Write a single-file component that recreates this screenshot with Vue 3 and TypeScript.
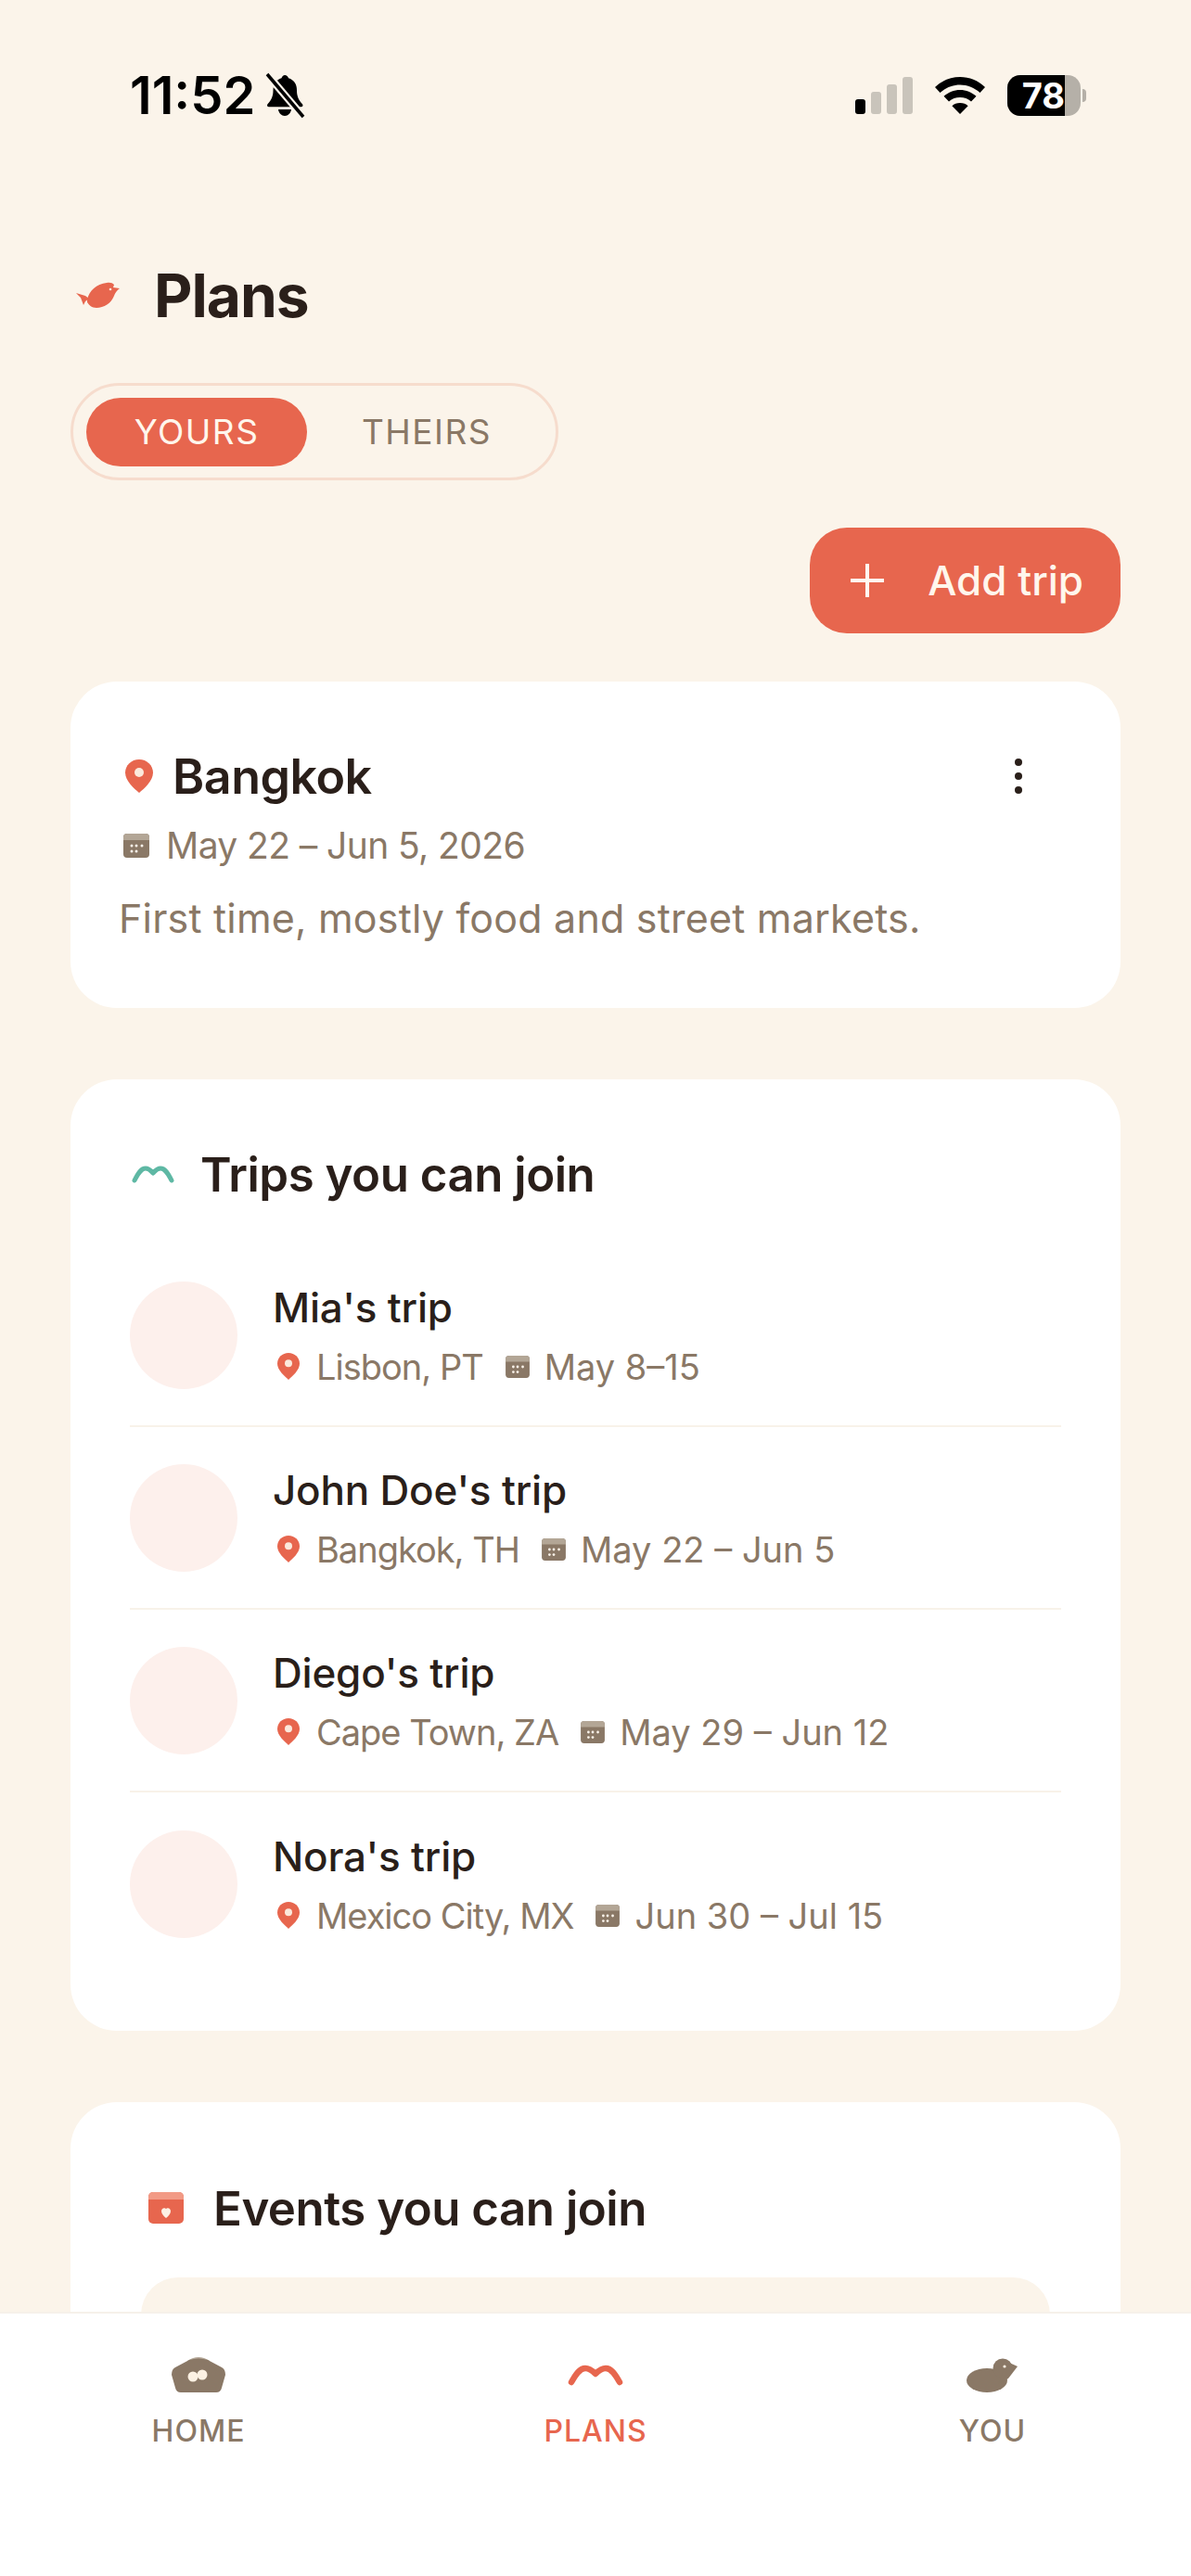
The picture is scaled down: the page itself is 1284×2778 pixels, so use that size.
<script setup lang="ts">
interface Trip {
  name: string;
  place: string;
  dates: string;
}

const trips: Trip[] = [
  { name: "Mia's trip", place: "Lisbon, PT", dates: "May 8–15" },
  { name: "John Doe's trip", place: "Bangkok, TH", dates: "May 22 – Jun 5" },
  { name: "Diego's trip", place: "Cape Town, ZA", dates: "May 29 – Jun 12" },
  { name: "Nora's trip", place: "Mexico City, MX", dates: "Jun 30 – Jul 15" },
];
</script>

<template>
  <div class="screen">
    <svg class="defs" width="0" height="0" aria-hidden="true">
      <symbol id="pin" viewBox="0 0 30 36">
        <path d="M15 0C6.7 0 0 6.4 0 14.3 0 23 9.6 31.500 15 36c5.400-4.500 15-13 15-21.700C30 6.400 23.300 0 15 0Z" fill="#e7664e" />
        <circle cx="15" cy="14" r="5" fill="#fbe9dc" />
      </symbol>
      <symbol id="cal" viewBox="0 0 28 26">
        <rect width="28" height="26" rx="4" fill="#8a7866" />
        <path d="M4 0h20a4 4 0 0 1 4 4v3H0V4a4 4 0 0 1 4-4Z" fill="#b3a696" />
        <g fill="#fbf3ea">
          <circle cx="9" cy="13" r="1.500" /><circle cx="14" cy="13" r="1.500" /><circle cx="20" cy="13" r="1.500" />
          <circle cx="9" cy="19" r="1.500" /><circle cx="14" cy="19" r="1.500" />
        </g>
      </symbol>
    </svg>

    <div class="status">
      <div class="status-left">
        <span class="time">11:52</span>
        <svg width="44" height="50" viewBox="0 0 44 50">
          <path d="M22 3c2 0 3.500 1.300 4 3.200 6 1.800 9 6.500 9 13 0 6 1.500 10 6 15 1 1.300.5 3-1.500 3H5c-2 0-2.500-1.700-1.500-3 4.500-5 6-9 6-15 0-6.500 3-11.200 9-13C19 4.300 20.500 3 22 3Z" fill="#000" />
          <path d="M15 40h14c-.5 4-3.500 7-7 7s-6.500-3-7-7Z" fill="#000" />
          <path d="M3 2 42 48" stroke="#fbf4ea" stroke-width="8" />
          <path d="M3 2 42 48" stroke="#000" stroke-width="3.500" />
        </svg>
      </div>
      <div class="status-right">
        <svg class="signal" width="62" height="40" viewBox="0 0 62 40">
          <rect x="0" y="24" width="11" height="16" rx="3" fill="#000" />
          <rect x="17" y="16" width="11" height="24" rx="3" fill="#c9c4bb" />
          <rect x="34" y="8" width="11" height="32" rx="3" fill="#c9c4bb" />
          <rect x="51" y="0" width="11" height="40" rx="3" fill="#c9c4bb" />
        </svg>
        <svg class="wifi" width="54" height="40" viewBox="0 0 54 40">
          <path d="M27 0c10 0 19.500 3.800 27 11l-5.500 6C42.700 11.600 35 8.500 27 8.500S11.300 11.600 5.500 17L0 11C7.500 3.800 17 0 27 0Z" fill="#000" />
          <path d="M27 14c6.500 0 12.500 2.400 17.500 6.800L39 26.500c-3.300-2.900-7.500-4.400-12-4.400s-8.700 1.500-12 4.400L9.500 20.800C14.500 16.400 20.500 14 27 14Z" fill="#000" />
          <path d="M27 28c3.500 0 6.500 1.200 8.600 3.200L27 40l-8.600-8.800C20.500 29.200 23.500 28 27 28Z" fill="#000" />
        </svg>
        <div class="battery">
          <div class="battery-body">
            <div class="battery-level">78</div>
          </div>
          <div class="battery-nub"></div>
        </div>
      </div>
    </div>

    <main class="content">
      <header class="page-head">
        <svg class="bird" width="48" height="28" viewBox="0 0 48 28">
          <path d="M12 19C14 10 22 2 33 1c4-.5 6 0 8 2l-1 3 7 1c-3 2-5 5-6 8-3 8-11 13-19 13-5 0-8-3-10-6Z" fill="#e7664e" />
          <path d="M0 12l10 3 4 3-4 3-2 4-3-8Z" fill="#e7664e" />
          <circle cx="37" cy="8" r="1.300" fill="#fbe9dc" />
        </svg>
        <h1>Plans</h1>
      </header>

      <div class="segment">
        <div class="seg-item active">YOURS</div>
        <div class="seg-item">THEIRS</div>
      </div>

      <div class="actions">
        <div class="add-btn">
          <svg width="36" height="36" viewBox="0 0 36 36">
            <path d="M18 0v36M0 18h36" stroke="#fff8f0" stroke-width="4" />
          </svg>
          <span>Add trip</span>
        </div>
      </div>

      <section class="card plan">
        <div class="plan-title">
          <svg class="pin-lg"><use href="#pin" /></svg>
          <span class="plan-name">Bangkok</span>
          <div class="kebab"><i></i><i></i><i></i></div>
        </div>
        <div class="plan-date">
          <svg class="cal-lg"><use href="#cal" /></svg>
          <span>May 22 – Jun 5, 2026</span>
        </div>
        <p class="plan-desc">First time, mostly food and street markets.</p>
      </section>

      <section class="card join">
        <div class="section-head">
          <svg width="46" height="22" viewBox="0 0 46 22" class="wave">
            <path d="M3 18C7 10 10 5 15 5c4 0 6 3 8 5 2-2 4-5 8-5 5 0 8 5 12 13" fill="none" stroke="#5eb8a4" stroke-width="5" stroke-linecap="round" stroke-linejoin="round" />
          </svg>
          <h2>Trips you can join</h2>
        </div>
        <ul class="trips">
          <li v-for="trip in trips" :key="trip.name" class="trip">
            <div class="avatar"></div>
            <div class="trip-text">
              <div class="trip-name">{{ trip.name }}</div>
              <div class="trip-meta">
                <svg class="pin-sm"><use href="#pin" /></svg>
                <span class="place">{{ trip.place }}</span>
                <svg class="cal-sm"><use href="#cal" /></svg>
                <span>{{ trip.dates }}</span>
              </div>
            </div>
          </li>
        </ul>
      </section>

      <section class="card events">
        <div class="section-head events-head">
          <svg width="38" height="34" viewBox="0 0 38 34">
            <rect width="38" height="34" rx="5" fill="#e7664e" />
            <path d="M5 0h28a5 5 0 0 1 5 5v3H0V5a5 5 0 0 1 5-5Z" fill="#f29a85" />
            <path d="M19 28c-3-2.500-5-5-5-7.500 0-2 1.300-3.300 3-3.300 1 0 1.600.4 2 1 .4-.6 1-1 2-1 1.700 0 3 1.300 3 3.300 0 2.500-2 5-5 7.500Z" fill="#fdf1e4" />
          </svg>
          <h2>Events you can join</h2>
        </div>
        <div class="event-box"></div>
      </section>
    </main>

    <nav class="tabbar">
      <div class="tab">
        <svg width="60" height="40" viewBox="0 0 60 40">
          <path d="M18 5Q30-3 42 5z" fill="#b3a696" />
          <path d="M5 12 20 4q10-3 20 0l15 8q4 2 4 8l-4 14q-1 5-6 5H11q-5 0-6-5L1 20q0-6 4-8Z" fill="#8a7866" />
          <circle cx="24" cy="22" r="5.500" fill="#fcf1e3" />
          <circle cx="34" cy="20" r="5.500" fill="#fcf1e3" />
        </svg>
        <span>HOME</span>
      </div>
      <div class="tab on">
        <svg width="60" height="40" viewBox="0 0 60 40">
          <path d="M4 28C9 19 13 13 19 13c5 0 8 3 11 6 3-3 6-6 11-6 6 0 10 6 15 15" fill="none" stroke="#e7664e" stroke-width="6.500" stroke-linecap="round" stroke-linejoin="round" />
        </svg>
        <span>PLANS</span>
      </div>
      <div class="tab">
        <svg width="60" height="40" viewBox="0 0 60 40">
          <ellipse cx="24" cy="26" rx="22" ry="13" fill="#8a7866" />
          <circle cx="41" cy="13" r="10.500" fill="#8a7866" />
          <path d="M46 6 57 11 47 24 36 30Z" fill="#8a7866" />
          <circle cx="43" cy="11" r="1.600" fill="#fcf1e3" />
        </svg>
        <span>YOU</span>
      </div>
    </nav>
  </div>
</template>

<style scoped>
.screen {
  position: relative;
  width: 1284px;
  height: 2778px;
  overflow: hidden;
  background: #fbf4ea;
  font-family: Inter, "Liberation Sans", sans-serif;
  color: #2a1f1a;
}

.defs {
  position: absolute;
}

.status {
  display: flex;
  justify-content: space-between;
  align-items: center;
  height: 50px;
  padding: 78px 113px 0 140px;
}

.status-left {
  display: flex;
  align-items: center;
  gap: 10px;
}

.time {
  font-size: 56px;
  font-weight: 600;
  color: #000;
}

.status-right {
  display: flex;
  align-items: center;
}

.wifi {
  margin-left: 24px;
}

.battery {
  display: flex;
  align-items: center;
  margin-left: 24px;
}

.battery-body {
  width: 79px;
  height: 44px;
  border-radius: 14px;
  background: #b5b0a8;
  overflow: hidden;
}

.battery-level {
  width: 62px;
  height: 44px;
  background: #000;
  color: #fff;
  font-size: 38px;
  font-weight: 700;
  line-height: 44px;
  text-align: right;
}

.battery-nub {
  width: 4px;
  height: 14px;
  margin-left: 2px;
  border-radius: 0 6px 6px 0;
  background: #b5b0a8;
}

.content {
  padding: 0 76px;
}

.page-head {
  display: flex;
  align-items: center;
  gap: 37px;
  margin-top: 160px;
  padding-left: 5px;
  height: 60px;
}

.bird {
  margin-left: 1px;
  margin-right: -1px;
}

h1 {
  margin: 0;
  font-size: 64px;
  font-weight: 700;
  letter-spacing: -1px;
}

.segment {
  display: inline-flex;
  align-items: center;
  width: 526px;
  height: 105px;
  box-sizing: border-box;
  margin-top: 65px;
  padding: 0 14px;
  border: 3px solid #f6dccd;
  border-radius: 53px;
}

.seg-item {
  flex: none;
  width: 238px;
  height: 74px;
  border-radius: 37px;
  font-size: 37px;
  line-height: 74px;
  text-align: center;
  letter-spacing: 1.500px;
  color: #8a7866;
}

.seg-item + .seg-item {
  width: 258px;
}

.seg-item.active {
  background: #e7664e;
  color: #fff6ec;
}

.actions {
  display: flex;
  justify-content: flex-end;
  margin-top: 51px;
}

.add-btn {
  display: flex;
  align-items: center;
  gap: 47px;
  height: 114px;
  padding: 0 40px 0 44px;
  border-radius: 40px;
  background: #e7664e;
  color: #fff6ec;
  font-size: 44px;
  font-weight: 500;
}

.card {
  margin-top: 77px;
  border-radius: 50px;
  background: #fff;
}

.plan {
  margin-top: 52px;
  height: 352px;
  box-sizing: border-box;
  padding: 72px 52px 0;
}

.plan-title {
  display: flex;
  align-items: center;
  height: 60px;
}

.pin-lg {
  width: 30px;
  height: 36px;
  margin-left: 7px;
  margin-right: 21px;
}

.plan-name {
  font-size: 52px;
  font-weight: 600;
  letter-spacing: -.5px;
}

.kebab {
  display: flex;
  flex-direction: column;
  gap: 7px;
  margin-left: auto;
  margin-right: 54px;
}

.kebab i {
  display: block;
  width: 8px;
  height: 8px;
  border-radius: 50%;
  background: #2a1f1a;
}

.plan-date {
  display: flex;
  align-items: center;
  gap: 18px;
  margin-top: 21px;
  font-size: 39px;
  letter-spacing: -.6px;
  color: #8a7866;
}

.cal-lg {
  width: 28px;
  height: 26px;
  margin-left: 5px;
}

.plan-desc {
  margin: 29px 0 0;
  font-size: 43px;
  letter-spacing: .2px;
  color: #8a7866;
}

.join {
  height: 1026px;
  box-sizing: border-box;
  padding: 72px 64px 0;
}

.section-head {
  display: flex;
  align-items: center;
  gap: 28px;
  height: 60px;
}

.wave {
  margin-left: 2px;
}

h2 {
  margin: 0;
  font-size: 51px;
  font-weight: 600;
  letter-spacing: -.5px;
}

.trips {
  margin: 46px 0 0;
  padding: 0;
  list-style: none;
}

.trip {
  display: flex;
  align-items: center;
  gap: 38px;
  height: 197px;
  box-sizing: border-box;
  border-bottom: 2px solid #f8f2e9;
}

.trip:last-child {
  border-bottom: 0;
}

.avatar {
  width: 116px;
  height: 116px;
  border-radius: 50%;
  background: #fdf0ec;
  flex: none;
}

.trip-name {
  font-size: 44px;
  font-weight: 500;
  letter-spacing: -.2px;
}

.trip-meta {
  display: flex;
  align-items: center;
  margin-top: 14px;
  font-size: 38px;
  color: #8a7866;
}

.place {
  letter-spacing: -1px;
}

.pin-sm {
  width: 24px;
  height: 29px;
  margin-left: 5px;
  margin-right: 18px;
}

.cal-sm {
  width: 26px;
  height: 24px;
  margin: 0 16px 0 24px;
}

.events {
  height: 800px;
  padding: 84px 76px 0;
}

.events-head {
  gap: 32px;
  margin-left: 8px;
}

.event-box {
  height: 300px;
  margin-top: 45px;
  border-radius: 40px;
  background: #fbf4ea;
}

.tabbar {
  position: absolute;
  left: 0;
  right: 0;
  bottom: 0;
  height: 285px;
  box-sizing: border-box;
  display: grid;
  grid-template-columns: repeat(3, 1fr);
  border-top: 2px solid #f6f1ea;
  background: #fff;
}

.tab {
  display: flex;
  flex-direction: column;
  align-items: center;
  padding-top: 46px;
  gap: 21px;
  font-size: 32px;
  font-weight: 500;
  letter-spacing: 1px;
  color: #8a7866;
}

.tab.on {
  color: #e7664e;
}
</style>

<style>
html,
body {
  margin: 0;
  background: #fbf4ea;
}
</style>
